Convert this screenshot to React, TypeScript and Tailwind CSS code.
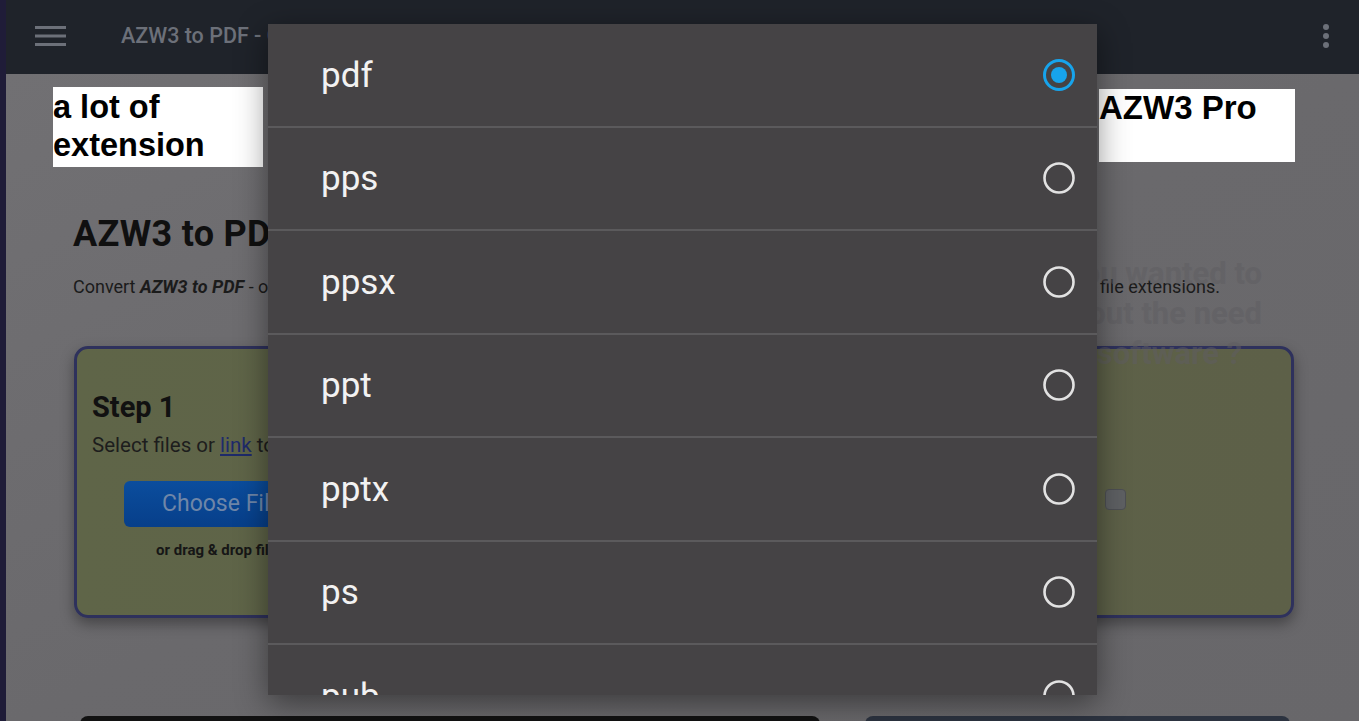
import React from "react";

const items = ["pdf", "pps", "ppsx", "ppt", "pptx", "ps", "pub"];

function Radio({ checked }: { checked: boolean }) {
  return checked ? (
    <svg width="34" height="34" viewBox="0 0 34 34">
      <circle cx="17" cy="17" r="14.5" fill="none" stroke="#17a4ec" strokeWidth="3" />
      <circle cx="17" cy="17" r="8" fill="#17a4ec" />
    </svg>
  ) : (
    <svg width="34" height="34" viewBox="0 0 34 34">
      <circle cx="17" cy="17" r="14.5" fill="none" stroke="#e2e2e2" strokeWidth="2.6" />
    </svg>
  );
}

export default function App() {
  return (
    <div
      className="relative w-[1359px] h-[721px] overflow-hidden flex bg-[#6a696c]"
      style={{ fontFamily: "Roboto, 'Noto Sans', sans-serif" }}
    >
      {/* left dark strip */}
      <div className="w-[6px] shrink-0 bg-[#1f1c38]" />

      <div className="flex-1 flex flex-col min-w-0">
        {/* top bar */}
        <div className="h-[74px] shrink-0 bg-[#1f232a] flex items-center pl-[29px] pr-[30px]">
          <svg width="32" height="22" viewBox="0 0 32 22" className="mt-[-2px]">
            <rect x="0" y="1" width="31" height="3" fill="#6c7079" />
            <rect x="0" y="9.5" width="31" height="3" fill="#6c7079" />
            <rect x="0" y="18" width="31" height="3" fill="#6c7079" />
          </svg>
          <div className="ml-[54px] text-[21.5px] font-medium text-[#6c7079] mt-[-2px] whitespace-nowrap">
            AZW3 to PDF - Convert file now
          </div>
          <div className="flex-1" />
          <div className="flex flex-col gap-[3px] mt-[-2px]">
            <span className="w-[6px] h-[6px] rounded-full bg-[#6c7079]" />
            <span className="w-[6px] h-[6px] rounded-full bg-[#6c7079]" />
            <span className="w-[6px] h-[6px] rounded-full bg-[#6c7079]" />
          </div>
        </div>

        {/* page body */}
        <div className="flex-1 flex flex-col bg-gradient-to-br from-[#717073] via-[#6a696c] to-[#68676a]">
          {/* ad / label row */}
          <div className="h-[138px] shrink-0 flex justify-between pl-[47px] pr-[64px] pt-[13px]">
            <div
              className="w-[210px] h-[80px] bg-white text-black font-bold text-[32.5px] leading-[38px] pt-[1px] whitespace-nowrap"
              style={{ fontFamily: "'Liberation Sans', Arial, sans-serif" }}
            >
              a lot of
              <br />
              extension
            </div>
            <div
              className="w-[196px] h-[73px] mt-[2px] bg-white text-black font-bold text-[33px] leading-[38px] whitespace-nowrap"
              style={{ fontFamily: "'Liberation Sans', Arial, sans-serif" }}
            >
              AZW3 Pro
            </div>
          </div>

          {/* title */}
          <div className="pl-[67px] text-[36px] leading-[44px] font-bold text-[#101010] tracking-[0.3px] whitespace-nowrap">
            AZW3 to PDF Converter
          </div>

          {/* description */}
          <div className="relative flex justify-between pl-[67px] pr-[139px] mt-[20px] text-[18px] leading-[22px] text-[#1b1b1b] whitespace-nowrap">
            <span>
              Convert <b><i>AZW3 to PDF</i></b> - online and free
            </span>
            <span>file extensions.</span>
            <div className="absolute z-10 right-[97px] top-[-22px] text-right text-[31px] leading-[40px] font-bold text-[#5f5e62] opacity-50">
              Have you wanted to
              <br />
              convert without the need
              <br />
              <span className="mr-[20px]">of a software ?</span>
            </div>
          </div>

          {/* card */}
          <div className="mt-[48px] ml-[68px] mr-[65px] h-[272px] rounded-[14px] border-[3px] border-[#2e315c] bg-gradient-to-r from-[#5f6548] to-[#5d6048] shadow-[0_6px_14px_rgba(0,0,0,0.35)] flex px-[15px] pt-[40px] relative">
            <div className="flex flex-col">
              <div className="text-[29px] leading-[36px] font-bold text-[#111]">Step 1</div>
              <div className="mt-[8px] text-[20.5px] leading-[24px] text-[#1d1d1d] whitespace-nowrap">
                Select files or <span className="underline text-[#1e2a6a]">link</span> to convert
              </div>
              <div className="ml-[32px] mt-[24px] self-start h-[46px] px-[38px] rounded-[6px] bg-gradient-to-b from-[#0b4d9d] to-[#073f8a] flex items-center text-[23px] text-[#6f86a8] whitespace-nowrap">
                Choose Files
              </div>
              <div className="ml-[64px] mt-[14px] text-[15px] leading-[18px] font-bold text-[#161616] whitespace-nowrap">
                or drag &amp; drop files here
              </div>
            </div>
            <div className="absolute left-[1028px] top-[140px] w-[21px] h-[21px] rounded-[4px] bg-[#5e6063] border border-[#4d4f53]" />
          </div>

          {/* bottom items */}
          <div className="mt-[98px] flex pl-[74px] gap-[45px]">
            <div className="w-[740px] h-[10px] rounded-t-[8px] bg-[#121212]" />
            <div className="w-[425px] h-[10px] rounded-t-[8px] bg-[#2c3340]" />
          </div>
        </div>
      </div>

      {/* dropdown dialog */}
      <div className="absolute z-20 left-[268px] top-[24px] w-[829px] h-[671px] bg-[#454345] overflow-hidden shadow-[0_8px_30px_rgba(0,0,0,0.45)]">
        {items.map((it, i) => (
          <div
            key={it}
            className="h-[103.5px] flex items-center justify-between pl-[53px] pr-[21px] border-b-2 border-[#5b5a5c]"
          >
            <span className="text-[35px] text-[#f2f2f2] mt-[2px]">{it}</span>
            <Radio checked={i === 0} />
          </div>
        ))}
      </div>
    </div>
  );
}
